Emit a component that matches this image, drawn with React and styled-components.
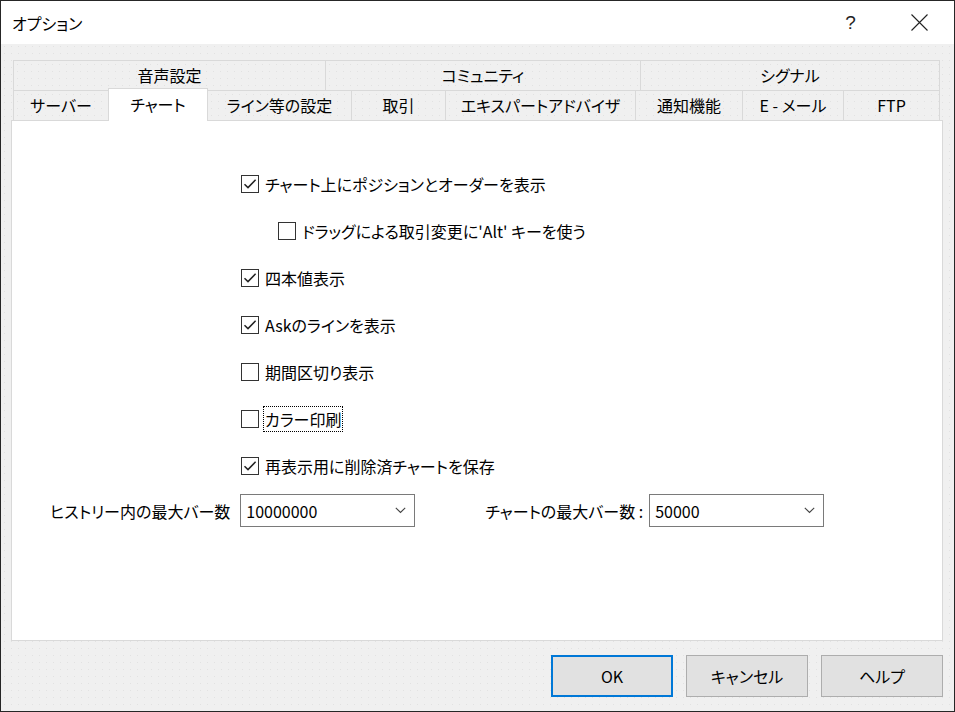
import React from "react";
import styled, { createGlobalStyle, css } from "styled-components";

const Global = createGlobalStyle`
  html, body { margin: 0; padding: 0; background: #fff; }
  body { font-family: "Noto Sans CJK JP", "Noto Sans", sans-serif; }
  * { box-sizing: border-box; }
`;

const dots = css`
  background-color: #f0f0f0;
  background-image: radial-gradient(circle, #e2e2e2 0.6px, transparent 1px);
  background-size: 7px 7px;
`;

const Window = styled.div`
  width: 955px;
  height: 712px;
  border: 1px solid #262626;
  display: flex;
  flex-direction: column;
  font-family: "Noto Sans CJK JP", sans-serif;
  font-feature-settings: "palt";
  color: #000;
  ${dots}
`;

const TitleBar = styled.div`
  height: 43px;
  background: #fff;
  display: flex;
  align-items: center;
  padding-left: 11px;
  font-size: 16px;
`;

const Title = styled.div`
  flex: 1;
`;

const TitleButton = styled.div`
  width: 69px;
  height: 43px;
  display: flex;
  align-items: center;
  justify-content: center;
  font-family: "Liberation Sans", sans-serif;
  font-size: 19px;
  color: #222;
`;

const Body = styled.div`
  flex: 1;
  display: flex;
  flex-direction: column;
  padding: 16px 11px 0 10px;
`;

const TabRow = styled.div`
  display: flex;
  height: 30px;
  margin: 0 2px;
`;

const Tab = styled.div`
  width: ${(p) => p.$w}px;
  flex: none;
  display: flex;
  align-items: center;
  justify-content: center;
  font-size: 16px;
  border: 1px solid #d9d9d9;
  border-right: none;
  border-bottom: none;
  &:last-child { border-right: 1px solid #d9d9d9; }
  position: relative;
  ${(p) =>
    p.$active
      ? css`
          background: #fff;
          margin-top: -2px;
          height: 33px;
          border-right: 1px solid #d9d9d9;
          z-index: 2;
          padding-bottom: 3px;
          & + div { border-left: none; }
        `
      : css`
          ${dots}
          padding-bottom: 2px;
        `}
`;

const Panel = styled.div`
  height: 521px;
  background: #fff;
  border: 1px solid #d9d9d9;
  position: relative;
  z-index: 1;
  padding-top: 39px;
  display: flex;
  flex-direction: column;
`;

const CheckList = styled.div`
  display: flex;
  flex-direction: column;
  padding-left: 229px;
`;

const CheckRow = styled.div`
  height: 47px;
  display: flex;
  align-items: center;
  padding-left: ${(p) => (p.$indent ? 37 : 0)}px;
  font-size: 16px;
`;

const Box = styled.div`
  width: 18px;
  height: 18px;
  border: 1px solid #333;
  background: #fff;
  display: flex;
  align-items: center;
  justify-content: center;
  margin-right: 6px;
  flex: none;
`;

const Label = styled.span`
  padding: 1px;
  margin-left: -1px;
  outline: ${(p) => (p.$focus ? "1px dotted #000" : "none")};
  line-height: 22px;
`;

const ComboRow = styled.div`
  display: flex;
  align-items: center;
  margin-top: 5px;
  padding-left: 38px;
  font-size: 16px;
`;

const ComboLabel = styled.span`
  margin-right: ${(p) => p.$gap}px;
`;

const Combo = styled.div`
  width: 175px;
  height: 33px;
  border: 1px solid #7a7a7a;
  background: #fff;
  display: flex;
  align-items: center;
  padding: 0 8px 0 5px;
  margin-right: ${(p) => p.$after || 0}px;
`;

const ComboValue = styled.span`
  flex: 1;
`;

const Footer = styled.div`
  display: flex;
  justify-content: flex-end;
  gap: 13px;
  padding-top: 14px;
`;

const Button = styled.div`
  width: 122px;
  height: 42px;
  display: flex;
  align-items: center;
  justify-content: center;
  background: #e1e1e1;
  border: ${(p) => (p.$default ? "2px solid #0078d7" : "1px solid #adadad")};
  font-size: 16px;
`;

const Check = ({ checked }) => (
  <Box>
    {checked && (
      <svg width="14" height="12" viewBox="0 0 14 12">
        <path d="M1.5 6.2 L5 9.6 L12.6 1.8" fill="none" stroke="#222" strokeWidth="1.5" />
      </svg>
    )}
  </Box>
);

const Chevron = () => (
  <svg width="11" height="7" viewBox="0 0 11 7">
    <path d="M0.8 0.8 L5.5 5.5 L10.2 0.8" fill="none" stroke="#444" strokeWidth="1.1" />
  </svg>
);

const topTabs = [
  ["音声設定", 312],
  ["コミュニティ", 315],
  ["シグナル", 300],
];
const bottomTabs = [
  ["サーバー", 95],
  ["チャート", 100, true],
  ["ライン等の設定", 143],
  ["取引", 94],
  ["エキスパートアドバイザ", 190],
  ["通知機能", 107],
  ["E - メール", 101],
  ["FTP", 97],
];

const checks = [
  { t: "チャート上にポジションとオーダーを表示", c: true },
  { t: "ドラッグによる取引変更に'Alt' キーを使う", c: false, indent: true },
  { t: "四本値表示", c: true },
  { t: "Askのラインを表示", c: true },
  { t: "期間区切り表示", c: false },
  { t: "カラー印刷", c: false, focus: true },
  { t: "再表示用に削除済チャートを保存", c: true },
];

export default function App() {
  return (
    <>
      <Global />
      <Window>
        <TitleBar>
          <Title>オプション</Title>
          <TitleButton>?</TitleButton>
          <TitleButton>
            <svg width="17" height="17" viewBox="0 0 17 17">
              <path d="M0.5 0.5 L16.5 16.5 M16.5 0.5 L0.5 16.5" stroke="#222" strokeWidth="1.1" />
            </svg>
          </TitleButton>
        </TitleBar>
        <Body>
          <TabRow>
            {topTabs.map(([t, w]) => (
              <Tab key={t} $w={w}>
                {t}
              </Tab>
            ))}
          </TabRow>
          <TabRow>
            {bottomTabs.map(([t, w, a]) => (
              <Tab key={t} $w={w} $active={a}>
                {t}
              </Tab>
            ))}
          </TabRow>
          <Panel>
            <CheckList>
              {checks.map((c) => (
                <CheckRow key={c.t} $indent={c.indent}>
                  <Check checked={c.c} />
                  <Label $focus={c.focus}>{c.t}</Label>
                </CheckRow>
              ))}
            </CheckList>
            <ComboRow>
              <ComboLabel $gap={10}>ヒストリー内の最大バー数</ComboLabel>
              <Combo $after={70}>
                <ComboValue>10000000</ComboValue>
                <Chevron />
              </Combo>
              <ComboLabel $gap={6}>チャートの最大バー数 :</ComboLabel>
              <Combo>
                <ComboValue>50000</ComboValue>
                <Chevron />
              </Combo>
            </ComboRow>
          </Panel>
          <Footer>
            <Button $default>OK</Button>
            <Button>キャンセル</Button>
            <Button>ヘルプ</Button>
          </Footer>
        </Body>
      </Window>
    </>
  );
}
